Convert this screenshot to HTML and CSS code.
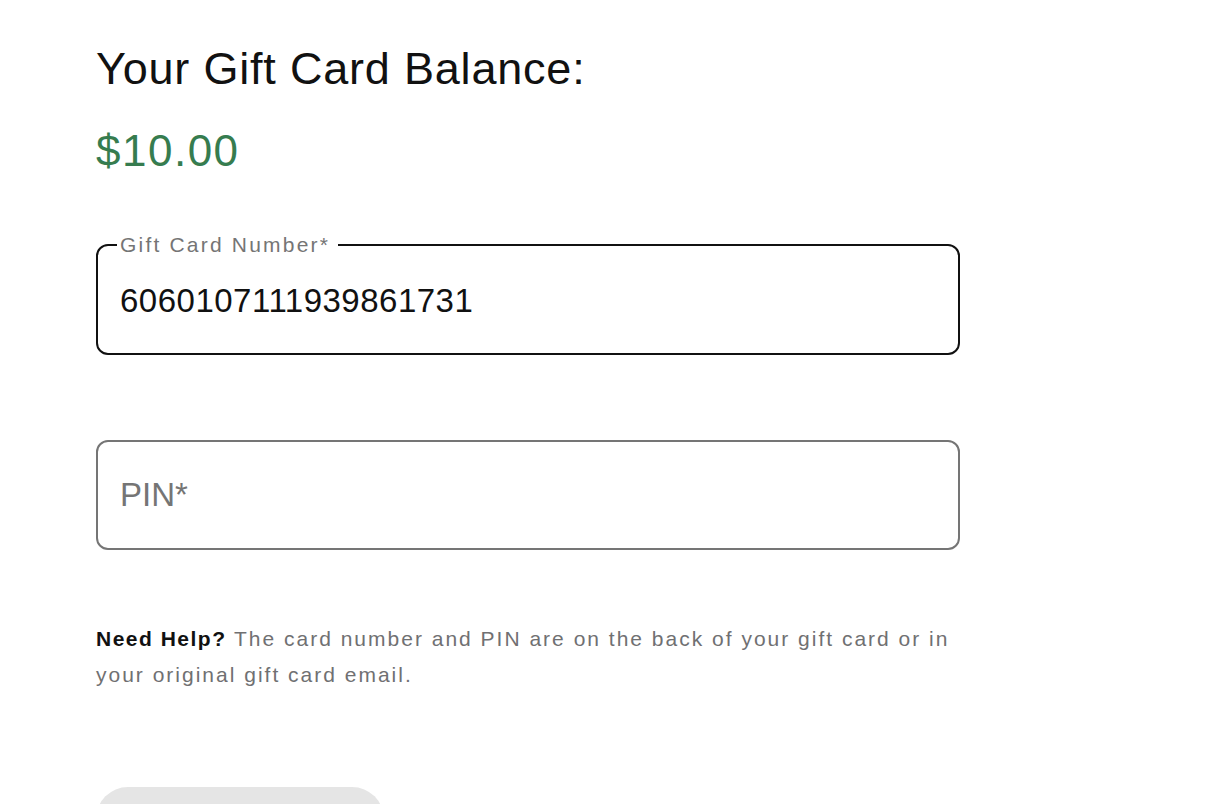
FILE: index.html
```html
<!DOCTYPE html>
<html>
<head>
<meta charset="utf-8">
<link rel="stylesheet" href="styles.css">
</head>
<body>
<main class="page">
  <h1 class="title">Your Gift Card Balance:</h1>
  <p class="amount">$10.00</p>
  <form class="form">
    <fieldset class="field field-filled">
      <legend class="field-label">Gift Card Number*</legend>
      <span class="field-value">6060107111939861731</span>
    </fieldset>
    <div class="field field-empty">
      <span class="field-placeholder">PIN*</span>
    </div>
    <p class="help"><strong class="help-strong">Need Help?</strong> The card number and PIN are on the back of your gift card or in your original gift card email.</p>
    <button type="button" class="btn">Check Balance</button>
  </form>
</main>
</body>
</html>
```
FILE: styles.css
```css
html, body {
  margin: 0;
  padding: 0;
  background: #ffffff;
}
body {
  font-family: "Liberation Sans", Arial, sans-serif;
  color: #111111;
}
.page {
  padding: 43px 0 0 96px;
  width: 864px;
}
.title {
  margin: 0;
  font-size: 45px;
  font-weight: 400;
  line-height: 52px;
  letter-spacing: 0.8px;
}
.amount {
  margin: 30px 0 0;
  font-size: 44px;
  line-height: 52px;
  color: #367c4f;
  letter-spacing: 1.5px;
}
.form {
  margin-top: 56px;
  display: flex;
  flex-direction: column;
}
.field {
  box-sizing: border-box;
  border-radius: 12px;
  margin: 0;
  min-width: 0;
  width: 864px;
}
.field-filled {
  border: 2px solid #111111;
  padding: 0 22px;
  height: 122px;
}
.field-label {
  padding: 0 8px 0 3px;
  margin-left: -3px;
  font-size: 21px;
  line-height: 24px;
  letter-spacing: 2.2px;
  color: #757575;
}
.field-value {
  display: block;
  margin-top: 24px;
  font-size: 33px;
  line-height: 40px;
  letter-spacing: 0.5px;
  color: #111111;
}
.field-empty {
  margin-top: 85px;
  height: 110px;
  border: 2px solid #757575;
  padding: 0 22px;
  display: flex;
  align-items: center;
}
.field-placeholder {
  font-size: 33px;
  color: #757575;
}
.help {
  margin: 71px 0 0;
  font-size: 21px;
  line-height: 36px;
  letter-spacing: 2px;
  color: #707072;
}
.help-strong {
  color: #111111;
  font-weight: 700;
  letter-spacing: 1.5px;
}
.btn {
  margin-top: 94px;
  width: 288px;
  height: 64px;
  border: none;
  border-radius: 32px;
  background: #e5e5e5;
  color: #9e9ea0;
  font-family: inherit;
  font-size: 20px;
}
```
